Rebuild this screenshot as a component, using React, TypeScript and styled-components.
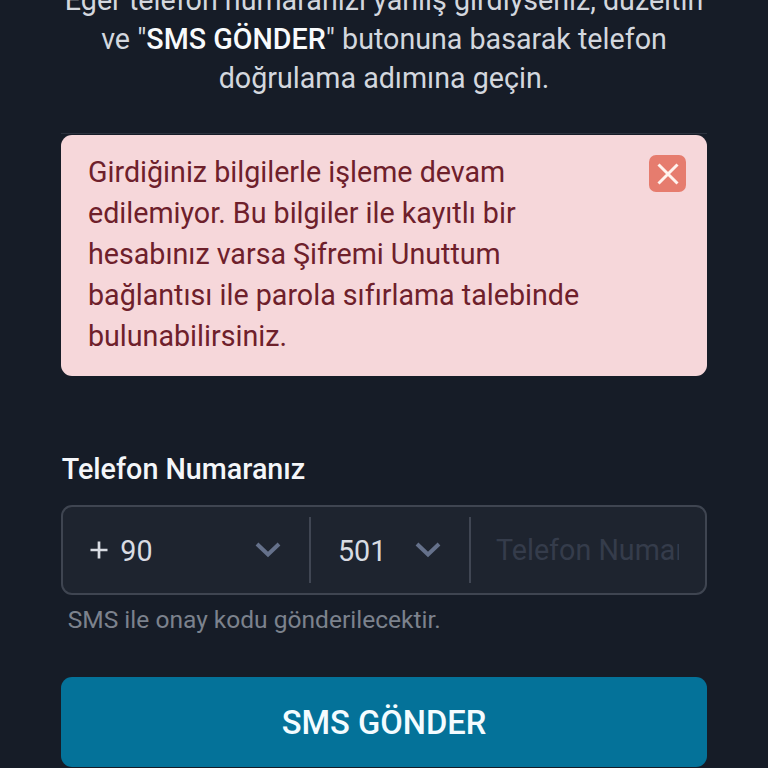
import React from "react";
import styled, { createGlobalStyle } from "styled-components";

const Global = createGlobalStyle`
  *{box-sizing:border-box}
  html,body{margin:0;background:#161c27}
  body{font-family:Roboto,sans-serif;overflow:hidden}
`;
const Page = styled.main`
  width:768px;height:768px;overflow:hidden;padding:0 61.3px;
  background:#161c27;display:flex;flex-direction:column;
`;
const Intro = styled.p`
  margin:-19px 0 0;height:153px;flex:none;text-align:center;
  font-size:28.67px;line-height:39px;color:#d3d7de;
  border-bottom:1px solid #2b313d;white-space:nowrap;
  display:flex;flex-direction:column;align-items:center;
`;
const Strong = styled.strong`font-weight:500;color:#f8fafc;`;
const Alert = styled.section`
  margin-top:1px;height:241px;flex:none;border-radius:11px;background:#f6d7da;
  display:flex;justify-content:space-between;padding:17px 20.7px 0 26.7px;
`;
const Message = styled.p`margin:0;font-size:28.65px;line-height:41px;color:#6e202b;white-space:nowrap;`;
const Close = styled.button`
  width:37px;height:37px;margin-top:3px;padding:0;border:0;border-radius:7px;background:#e67c6e;
  display:grid;place-items:center;
`;
const Label = styled.label`margin:73px 0 0 .5px;font-size:28.7px;line-height:40px;font-weight:500;color:#f4f6f9;`;
const Field = styled.div`
  margin-top:16px;height:90px;flex:none;border:2px solid #3f4551;border-radius:11px;background:#1e242f;
  display:flex;align-items:center;color:#d9dce3;font-size:28.7px;
`;
const Cell = styled.div<{ $w: number; $pad: number }>`
  width:${p => p.$w}px;height:66px;padding:0 27.5px 0 ${p => p.$pad}px;border-right:2px solid #404653;
  display:flex;align-items:center;justify-content:space-between;
`;
const Value = styled.span`padding-top:2px;display:flex;align-items:center;gap:12px;`;
const Placeholder = styled.div`flex:1;min-width:0;margin:0 26px 0 25px;overflow:hidden;white-space:nowrap;color:#353c4b;`;
const Hint = styled.p`margin:7px 0 0 6.4px;font-size:24.55px;line-height:36px;color:#7c828d;white-space:nowrap;`;
const Submit = styled.button`
  margin-top:39.4px;height:90px;flex:none;border:0;border-radius:11px;background:#047299;
  padding:2px 0 0;color:#f4fcff;font:500 32.7px Roboto,sans-serif;
`;
const Chevron = () => (
  <svg width="26" height="16" viewBox="0 0 26 16" fill="none" stroke="#65718b" strokeWidth="4">
    <path d="M2 2 13 12.5 24 2" />
  </svg>
);
const Plus = () => (
  <svg width="18" height="20" viewBox="0 0 18 20" fill="none" stroke="#d9dce3" strokeWidth="2.7">
    <path d="M9 .5V17.5M.5 9H17.5" />
  </svg>
);

export default function App() {
  return (
    <Page>
      <Global />
      <Intro>
        <span>Eğer telefon numaranızı yanlış girdiyseniz, düzeltin</span>
        <span>ve "<Strong>SMS GÖNDER</Strong>" butonuna basarak telefon</span>
        <span>doğrulama adımına geçin.</span>
      </Intro>
      <Alert>
        <Message>
          Girdiğiniz bilgilerle işleme devam<br />edilemiyor. Bu bilgiler ile kayıtlı bir<br />
          hesabınız varsa Şifremi Unuttum<br />bağlantısı ile parola sıfırlama talebinde<br />bulunabilirsiniz.
        </Message>
        <Close aria-label="Kapat">
          <svg width="22" height="22" viewBox="0 0 22 22" stroke="#fff3ee" strokeWidth="3"><path d="M1.5 1.5 20.5 20.5M20.5 1.5 1.5 20.5" /></svg>
        </Close>
      </Alert>
      <Label>Telefon Numaranız</Label>
      <Field>
        <Cell $w={247.7} $pad={27}><Value><Plus />90</Value><Chevron /></Cell>
        <Cell $w={160} $pad={27}><Value>501</Value><Chevron /></Cell>
        <Placeholder>Telefon Numaranız</Placeholder>
      </Field>
      <Hint>SMS ile onay kodu gönderilecektir.</Hint>
      <Submit>SMS GÖNDER</Submit>
    </Page>
  );
}
